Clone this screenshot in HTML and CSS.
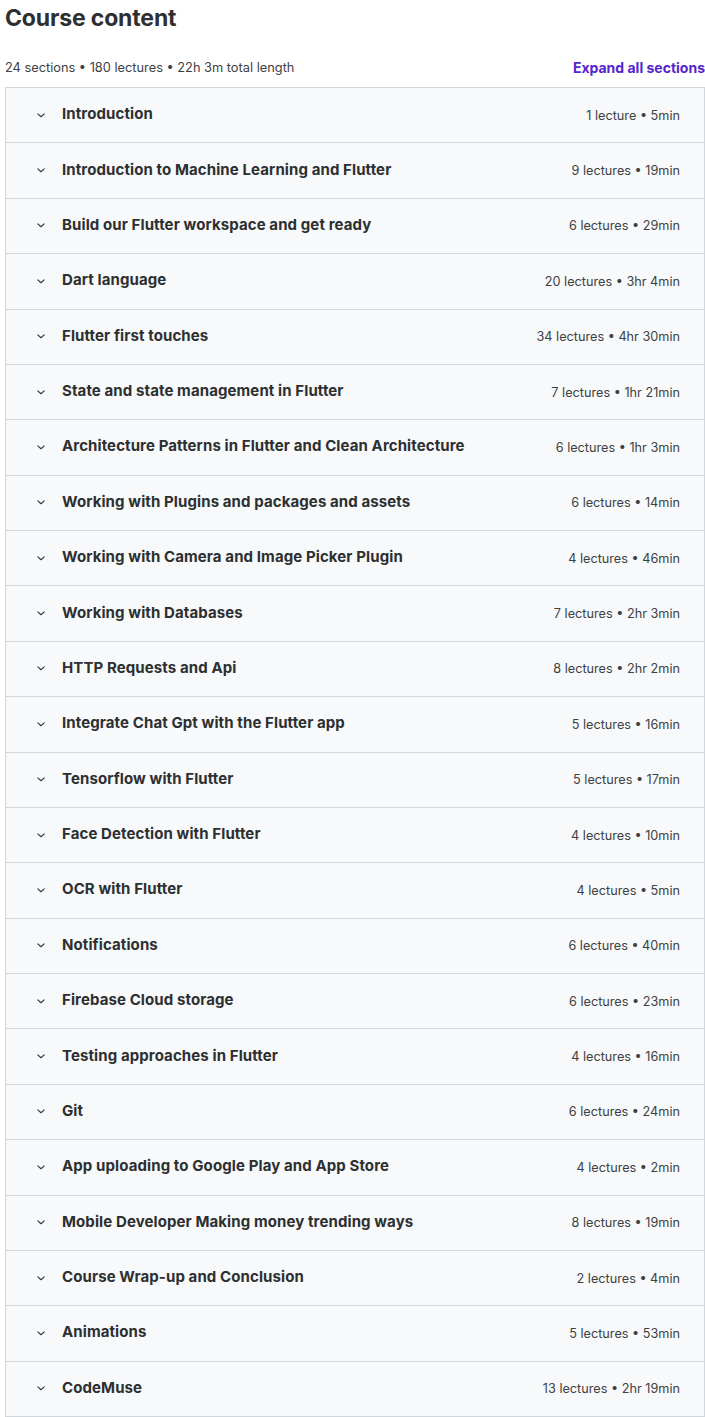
FILE: index.html
```html
<!DOCTYPE html>
<html lang="en">
<head>
  <meta charset="UTF-8">
  <meta name="viewport" content="width=device-width, initial-scale=1.0">
  <title>Course content</title>
  <link rel="stylesheet" href="styles.css">
</head>
<body>
  <div class="curriculum">
    <h2 class="title">Course content</h2>

    <div class="summary">
      <span>24 sections • 180 lectures • 22h 3m total length</span>
      <button class="expand-all" type="button">Expand all sections</button>
    </div>

    <div class="sections" id="sections"></div>
  </div>

  <script>
    const sections = [
      ['Introduction', '1 lecture • 5min'],
      ['Introduction to Machine Learning and Flutter', '9 lectures • 19min'],
      ['Build our Flutter workspace and get ready', '6 lectures • 29min'],
      ['Dart language', '20 lectures • 3hr 4min'],
      ['Flutter first touches', '34 lectures • 4hr 30min'],
      ['State and state management in Flutter', '7 lectures • 1hr 21min'],
      ['Architecture Patterns in Flutter and Clean Architecture', '6 lectures • 1hr 3min'],
      ['Working with Plugins and packages and assets', '6 lectures • 14min'],
      ['Working with Camera and Image Picker Plugin', '4 lectures • 46min'],
      ['Working with Databases', '7 lectures • 2hr 3min'],
      ['HTTP Requests and Api', '8 lectures • 2hr 2min'],
      ['Integrate Chat Gpt with the Flutter app', '5 lectures • 16min'],
      ['Tensorflow with Flutter', '5 lectures • 17min'],
      ['Face Detection with Flutter', '4 lectures • 10min'],
      ['OCR with Flutter', '4 lectures • 5min'],
      ['Notifications', '6 lectures • 40min'],
      ['Firebase Cloud storage', '6 lectures • 23min'],
      ['Testing approaches in Flutter', '4 lectures • 16min'],
      ['Git', '6 lectures • 24min'],
      ['App uploading to Google Play and App Store', '4 lectures • 2min'],
      ['Mobile Developer Making money trending ways', '8 lectures • 19min'],
      ['Course Wrap-up and Conclusion', '2 lectures • 4min'],
      ['Animations', '5 lectures • 53min'],
      ['CodeMuse', '13 lectures • 2hr 19min']
    ];

    const list = document.getElementById('sections');
    sections.forEach(([name, info]) => {
      const row = document.createElement('div');
      row.className = 'section';
      row.innerHTML =
        '<svg class="chevron" viewBox="0 0 24 24" width="14" height="14">' +
        '<path d="M6.5 10l5.5 5 5.5-5" fill="none" stroke="currentColor" stroke-width="1.8" stroke-linecap="round" stroke-linejoin="round"/></svg>' +
        '<span class="section-name"></span>' +
        '<span class="section-info"></span>';
      row.querySelector('.section-name').textContent = name;
      row.querySelector('.section-info').textContent = info;
      list.appendChild(row);
    });
  </script>
</body>
</html>
```

FILE: styles.css
```css
body {
  margin: 0;
  background-color: #fff;
  font-family: Inter, "Liberation Sans", sans-serif;
  color: #2d2f31;
}
.curriculum {
  width: 700px;
  margin-left: 5px;
}
.title {
  margin: 0;
  padding-top: 4px;
  font-size: 23px;
  font-weight: 700;
  line-height: 28px;
  letter-spacing: -0.15px;
}
.summary {
  display: flex;
  justify-content: space-between;
  align-items: center;
  margin-top: 25px;
  height: 20px;
  font-size: 12.8px;
  color: #3e4143;
}
.expand-all {
  background: none;
  border: none;
  padding: 0;
  font-family: inherit;
  font-size: 14px;
  font-weight: 700;
  color: #5624d0;
  cursor: pointer;
}
.sections {
  margin-top: 10px;
  border: 1px solid #d1d7dc;
  border-bottom: none;
}
.section {
  display: flex;
  align-items: center;
  height: 54.375px;
  padding: 0 24px 0 28px;
  background-color: #f7f9fa;
  border-bottom: 1px solid #d1d7dc;
}
.chevron {
  flex: none;
  color: #2d2f31;
  margin-right: 14px;
  margin-top: -1px;
}
.section-name {
  flex: 1;
  font-size: 15px;
  font-weight: 700;
  letter-spacing: 0.1px;
  margin-top: -3px;
}
.section-info {
  font-size: 12.7px;
  color: #3e4143;
}
```
